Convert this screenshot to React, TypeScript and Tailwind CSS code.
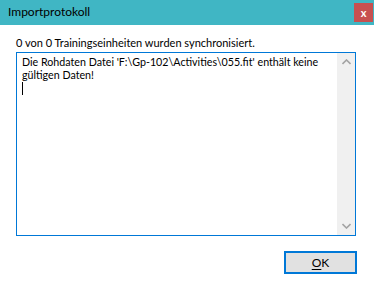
import React from 'react';

// Windows-style "Importprotokoll" dialog
const font = "font-['Segoe_UI','Lato',sans-serif]";

const Chevron: React.FC<{ up?: boolean }> = ({ up }) => (
  <svg width="9" height="6" viewBox="0 0 9 6" className={up ? '' : 'rotate-180'}>
    <path d="M0.5 5 L4.5 1 L8.5 5" fill="none" stroke="#a3a3a3" strokeWidth="1.6" />
  </svg>
);

export default function App() {
  return (
    <div className={`w-[374px] h-[288px] bg-white flex flex-col text-[11px] text-black ${font}`}>
      {/* Title bar */}
      <div className="h-[25px] bg-[#40b6c4] flex items-center justify-between shrink-0">
        <span className="pl-[8px] text-[12px] leading-none pb-[1px]">Importprotokoll</span>
        <div className="w-[19px] h-[19px] mr-[1px] bg-[#c75050] flex items-center justify-center">
          <span className="text-white text-[11px] font-bold leading-none -mt-[1px]">x</span>
        </div>
      </div>

      {/* Body */}
      <div className="flex flex-col px-4 pt-[10px]">
        <div className="h-[16px] leading-[16px] text-[11px]">0 von 0 Trainingseinheiten wurden synchronisiert.</div>

        <div className="mt-[1px] w-[340px] h-[184px] border border-[#0078d7] flex">
          <div className="flex-1 pl-[5px] pt-[2px] text-[10.7px] leading-[13px] whitespace-nowrap">
            <div>Die Rohdaten Datei 'F:\Gp-102\Activities\055.fit' enthält keine</div>
            <div>gültigen Daten!</div>
            <div className="w-[1px] h-[13px] bg-black mt-[1px]" />
          </div>
          <div className="w-[18px] bg-[#f0f0f0] flex flex-col items-center justify-between py-[6px]">
            <Chevron up />
            <Chevron />
          </div>
        </div>

        <div className="self-end mt-[15px] mr-[1px] w-[73px] h-[23px] border-2 border-[#0078d7] bg-[#e1e1e1] flex items-center justify-center">
          <span className="leading-none text-[12px]"><span className="underline underline-offset-2">O</span>K</span>
        </div>
      </div>
    </div>
  );
}
